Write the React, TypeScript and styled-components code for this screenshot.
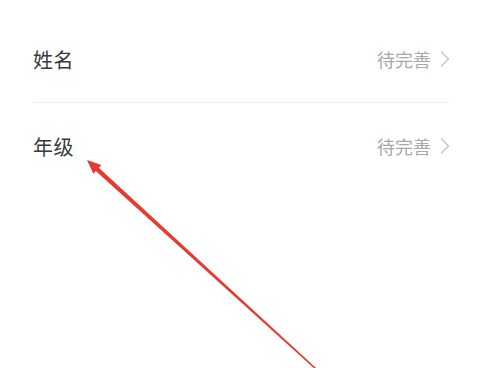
import styled, { createGlobalStyle } from 'styled-components';

const GlobalStyle = createGlobalStyle`
  html, body {
    margin: 0;
    padding: 0;
    background: #ffffff;
  }
  body {
    font-family: "Noto Sans CJK SC", "Noto Sans", sans-serif;
  }
`;

const rows = [
  { label: '姓名', value: '待完善' },
  { label: '年级', value: '待完善' },
];

function Chevron() {
  return (
    <ChevronSvg viewBox="0 0 10 16" aria-hidden>
      <polyline points="1.5,1 8.5,8 1.5,15" />
    </ChevronSvg>
  );
}

export default function App() {
  return (
    <>
      <GlobalStyle />
      <Page>
        <List>
          {rows.map((row, i) => (
            <Row key={row.label} $divider={i < rows.length - 1}>
              <Label>{row.label}</Label>
              <Value>
                {row.value}
                <Chevron />
              </Value>
            </Row>
          ))}
        </List>
        <Annotation viewBox="0 0 491 368" aria-hidden>
          <polygon
            points="87,160 101.4,165 98.8,167.8 316.5,368.4 315.5,369.6 95.8,171 93.3,173.8"
            fill="#e63b2e"
          />
        </Annotation>
      </Page>
    </>
  );
}

const Page = styled.div`
  position: relative;
  width: 491px;
  height: 368px;
  overflow: hidden;
  background: #ffffff;
`;

const List = styled.div`
  display: flex;
  flex-direction: column;
  padding: 16px 41px 0 33px;
`;

const Row = styled.div<{ $divider: boolean }>`
  display: flex;
  align-items: center;
  justify-content: space-between;
  height: 86px;
  border-bottom: 1px solid ${(p) => (p.$divider ? '#f0f0f0' : 'transparent')};
`;

const Label = styled.span`
  font-size: 20px;
  color: #3a3a3a;
  letter-spacing: 0.5px;
`;

const Value = styled.span`
  display: flex;
  align-items: center;
  gap: 9px;
  font-size: 18px;
  color: #a8a8a8;
`;

const ChevronSvg = styled.svg`
  width: 10px;
  height: 16px;
  fill: none;
  stroke: #c4c4c4;
  stroke-width: 1.4;
  stroke-linecap: round;
  stroke-linejoin: round;
`;

const Annotation = styled.svg`
  position: absolute;
  inset: 0;
  width: 491px;
  height: 368px;
  pointer-events: none;
`;
